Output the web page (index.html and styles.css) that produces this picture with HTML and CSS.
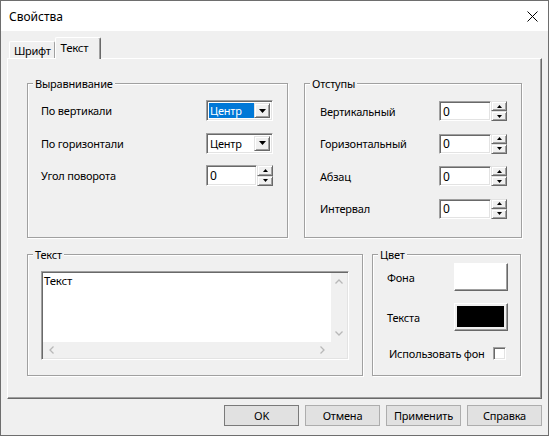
FILE: index.html
```html
<!DOCTYPE html>
<html lang="ru">
<head>
<meta charset="utf-8">
<title>Свойства</title>
<link rel="stylesheet" href="styles.css">
</head>
<body>
<div class="window">
  <div class="titlebar">
    <span class="title">Свойства</span>
    <svg class="close" width="11" height="11" viewBox="0 0 11 11"><path d="M0.5 0.5 L10.5 10.5 M10.5 0.5 L0.5 10.5" stroke="#000" stroke-width="1" fill="none"/></svg>
  </div>
  <div class="body">
    <div class="tabs">
      <div class="tab">Шрифт</div>
      <div class="tab active">Текст</div>
    </div>
    <div class="panel">
      <div class="row row1">
        <div class="group g-align">
          <div class="legend">Выравнивание</div>
          <div class="grid grid-align">
            <span>По вертикали</span>
            <div class="combo"><div class="combo-val sel">Центр</div><div class="combo-btn raised"><svg width="7" height="4" viewBox="0 0 7 4"><path d="M0 0 H7 L3.5 4 Z" fill="#000"/></svg></div></div>
            <span>По горизонтали</span>
            <div class="combo"><div class="combo-val">Центр</div><div class="combo-btn raised"><svg width="7" height="4" viewBox="0 0 7 4"><path d="M0 0 H7 L3.5 4 Z" fill="#000"/></svg></div></div>
            <span>Угол поворота</span>
            <div class="spin"><div class="spin-edit">0</div><div class="spin-btns"><div class="sbtn raised"><svg width="5" height="3" viewBox="0 0 5 3"><path d="M2.5 0 L5 3 H0 Z" fill="#000"/></svg></div><div class="sbtn raised"><svg width="5" height="3" viewBox="0 0 5 3"><path d="M0 0 H5 L2.5 3 Z" fill="#000"/></svg></div></div></div>
          </div>
        </div>
        <div class="group g-indent">
          <div class="legend">Отступы</div>
          <div class="grid grid-indent">
            <span>Вертикальный</span>
            <div class="spin"><div class="spin-edit">0</div><div class="spin-btns"><div class="sbtn raised"><svg width="5" height="3" viewBox="0 0 5 3"><path d="M2.5 0 L5 3 H0 Z" fill="#000"/></svg></div><div class="sbtn raised"><svg width="5" height="3" viewBox="0 0 5 3"><path d="M0 0 H5 L2.5 3 Z" fill="#000"/></svg></div></div></div>
            <span>Горизонтальный</span>
            <div class="spin"><div class="spin-edit">0</div><div class="spin-btns"><div class="sbtn raised"><svg width="5" height="3" viewBox="0 0 5 3"><path d="M2.5 0 L5 3 H0 Z" fill="#000"/></svg></div><div class="sbtn raised"><svg width="5" height="3" viewBox="0 0 5 3"><path d="M0 0 H5 L2.5 3 Z" fill="#000"/></svg></div></div></div>
            <span>Абзац</span>
            <div class="spin"><div class="spin-edit">0</div><div class="spin-btns"><div class="sbtn raised"><svg width="5" height="3" viewBox="0 0 5 3"><path d="M2.5 0 L5 3 H0 Z" fill="#000"/></svg></div><div class="sbtn raised"><svg width="5" height="3" viewBox="0 0 5 3"><path d="M0 0 H5 L2.5 3 Z" fill="#000"/></svg></div></div></div>
            <span>Интервал</span>
            <div class="spin"><div class="spin-edit">0</div><div class="spin-btns"><div class="sbtn raised"><svg width="5" height="3" viewBox="0 0 5 3"><path d="M2.5 0 L5 3 H0 Z" fill="#000"/></svg></div><div class="sbtn raised"><svg width="5" height="3" viewBox="0 0 5 3"><path d="M0 0 H5 L2.5 3 Z" fill="#000"/></svg></div></div></div>
          </div>
        </div>
      </div>
      <div class="row row2">
        <div class="group g-text">
          <div class="legend">Текст</div>
          <div class="memo">
            <div class="memo-text">Текст</div>
            <div class="vbar">
              <svg width="8" height="5" viewBox="0 0 8 5"><path d="M0.5 4.5 L4 1 L7.5 4.5" stroke="#b8b8b8" stroke-width="1.3" fill="none"/></svg>
              <svg width="8" height="5" viewBox="0 0 8 5"><path d="M0.5 0.5 L4 4 L7.5 0.5" stroke="#b8b8b8" stroke-width="1.3" fill="none"/></svg>
            </div>
            <div class="hbar">
              <svg width="5" height="8" viewBox="0 0 5 8"><path d="M4.5 0.5 L1 4 L4.5 7.5" stroke="#b8b8b8" stroke-width="1.3" fill="none"/></svg>
              <svg width="5" height="8" viewBox="0 0 5 8"><path d="M0.5 0.5 L4 4 L0.5 7.5" stroke="#b8b8b8" stroke-width="1.3" fill="none"/></svg>
            </div>
            <div class="corner"></div>
          </div>
        </div>
        <div class="group g-color">
          <div class="legend">Цвет</div>
          <div class="grid grid-color">
            <span>Фона</span>
            <div class="cbtn cbtn-white"></div>
            <span>Текста</span>
            <div class="cbtn cbtn-swatch"><div class="swatch"></div></div>
          </div>
          <div class="check-row">
            <span>Использовать фон</span>
            <div class="checkbox"></div>
          </div>
        </div>
      </div>
    </div>
    <div class="buttons">
      <div class="btn btn-default">OK</div>
      <div class="btn">Отмена</div>
      <div class="btn">Применить</div>
      <div class="btn">Справка</div>
    </div>
  </div>
</div>
</body>
</html>
```
FILE: styles.css
```css
* { box-sizing: border-box; }
html, body { margin: 0; padding: 0; }
body {
  width: 549px;
  height: 436px;
  overflow: hidden;
  font-family: "Noto Sans", "Liberation Sans", Arial, sans-serif;
  font-size: 11px;
  letter-spacing: -0.2px;
  color: #000;
  background: #f0f0f0;
}
.window {
  width: 549px;
  height: 436px;
  border: 1px solid #6e6e6e;
  background: #f0f0f0;
  display: flex;
  flex-direction: column;
}
.titlebar {
  flex: none;
  height: 30px;
  background: #fff;
  display: flex;
  align-items: center;
  justify-content: space-between;
  padding: 0 10px 0 8px;
}
.title {
  font-size: 12px;
  letter-spacing: 0;
}
.close { display: block; }
.body {
  flex: 1;
  display: flex;
  flex-direction: column;
  padding: 6px 6px 0 6px;
}
.tabs {
  display: flex;
  align-items: flex-end;
  height: 21px;
  padding-left: 2px;
  position: relative;
  z-index: 1;
}
.tab {
  flex: none;
  font-size: 11px;
  letter-spacing: -0.3px;
  height: 17px;
  padding: 0 3px 0 4px;
  display: flex;
  align-items: center;
  white-space: nowrap;
  border-top: 1px solid #fff;
  border-left: 1px solid #fff;
  border-right: 1px solid #a0a0a0;
  border-radius: 2px 2px 0 0;
  background: #f0f0f0;
}
.tab.active {
  width: 46px;
  height: 22px;
  margin-bottom: -1px;
  padding: 0 0 3px 5px;
  font-size: 11.5px;
  border-right: 1px solid #696969;
  box-shadow: inset -1px 0 0 #a0a0a0;
}
.panel {
  height: 341px;
  border-top: 1px solid #fff;
  border-left: 1px solid #fff;
  border-right: 1px solid #696969;
  border-bottom: 1px solid #696969;
  box-shadow: inset -1px -1px 0 #a0a0a0;
  padding: 24px 0 0 19px;
  display: flex;
  flex-direction: column;
  gap: 16px;
}
.row { display: flex; }
.row1 { height: 155px; gap: 16px; }
.row2 { height: 122px; gap: 9px; }
.group {
  border: 1px solid #a0a0a0;
  box-shadow: inset 1px 1px 0 #fff, 1px 1px 0 #fff;
}
.g-align { width: 261px; }
.g-indent { width: 218px; }
.g-text { width: 336px; }
.g-color { width: 149px; }
.legend {
  width: max-content;
  margin: -7px 0 0 5px;
  padding: 0 2px;
  line-height: 13px;
  background: #f0f0f0;
}
.grid {
  display: grid;
  align-items: center;
}
.grid-align {
  grid-template-columns: 165px 67px;
  grid-auto-rows: 21px;
  row-gap: 11.5px;
  margin: 10px 0 0 13px;
}
.grid-indent {
  grid-template-columns: 119px 68px;
  grid-auto-rows: 20px;
  row-gap: 12.5px;
  margin: 11px 0 0 15px;
}
.grid-color {
  grid-template-columns: 67px 54px;
  grid-auto-rows: 28px;
  row-gap: 12px;
  margin: 2px 0 0 14px;
}
.raised {
  background: #f0f0f0;
  border: 1px solid;
  border-color: #e3e3e3 #696969 #696969 #e3e3e3;
  box-shadow: inset 1px 1px 0 #fff, inset -1px -1px 0 #a0a0a0;
}
.combo {
  height: 21px;
  display: flex;
  padding: 2px;
  background: #fff;
  border: 1px solid;
  border-color: #a0a0a0 #fff #fff #a0a0a0;
  box-shadow: inset 1px 1px 0 #696969, inset -1px -1px 0 #e3e3e3;
}
.combo-val {
  flex: 1;
  line-height: 15px;
  padding-left: 1px;
}
.combo-val.sel {
  background: #0078d7;
  color: #fff;
}
.combo-btn {
  width: 16px;
  display: flex;
  align-items: center;
  justify-content: center;
}
.spin {
  display: flex;
  height: 100%;
}
.spin-edit {
  flex: 1;
  background: #fff;
  padding-left: 3px;
  display: flex;
  align-items: center;
  font-size: 12px;
  border: 1px solid;
  border-color: #a0a0a0 #fff #fff #a0a0a0;
  box-shadow: inset 1px 1px 0 #696969, inset -1px -1px 0 #e3e3e3;
}
.spin-btns {
  width: 16px;
  display: flex;
  flex-direction: column;
}
.sbtn {
  flex: 1;
  display: flex;
  align-items: center;
  justify-content: center;
}
.sbtn svg { display: block; }
.memo {
  width: 308px;
  height: 89px;
  margin: 10px 0 0 13px;
  border: 1px solid;
  border-color: #a0a0a0 #fff #fff #a0a0a0;
  box-shadow: inset 1px 1px 0 #696969, inset -1px -1px 0 #e3e3e3;
  padding: 1px;
  display: grid;
  grid-template-columns: 1fr 16px;
  grid-template-rows: 1fr 16px;
  background: #fff;
}
.memo-text {
  padding: 1px 0 0 1px;
  line-height: 13px;
  font-size: 11.5px;
}
.vbar {
  background: #f0f0f0;
  display: flex;
  flex-direction: column;
  justify-content: space-between;
  align-items: center;
  padding: 6px 0 6px;
}
.hbar {
  background: #f0f0f0;
  display: flex;
  justify-content: space-between;
  align-items: center;
  padding: 0 6px;
}
.corner { background: #f0f0f0; }
.cbtn {
  height: 28px;
  border: 1px solid;
  border-color: #fff #696969 #696969 #fff;
  box-shadow: inset -1px -1px 0 #a0a0a0;
}
.cbtn-white { background: #fff; }
.cbtn-swatch {
  background: #f0f0f0;
  padding: 2px 3px 3px 2px;
}
.swatch {
  width: 100%;
  height: 100%;
  background: #000;
}
.check-row {
  display: grid;
  grid-template-columns: 104px 13px;
  align-items: center;
  height: 13px;
  margin: 15px 0 0 16px;
}
.checkbox {
  width: 13px;
  height: 13px;
  background: #fff;
  border: 1px solid;
  border-color: #a0a0a0 #fff #fff #a0a0a0;
  box-shadow: inset 1px 1px 0 #696969, inset -1px -1px 0 #e3e3e3;
}
.buttons {
  display: flex;
  justify-content: flex-end;
  gap: 6px;
  margin-top: 6px;
}
.btn {
  width: 75px;
  height: 21px;
  background: #e1e1e1;
  border: 1px solid #adadad;
  display: flex;
  align-items: center;
  justify-content: center;
  font-size: 11px;
}
.btn-default { border-color: #7a7a7a; }
```
